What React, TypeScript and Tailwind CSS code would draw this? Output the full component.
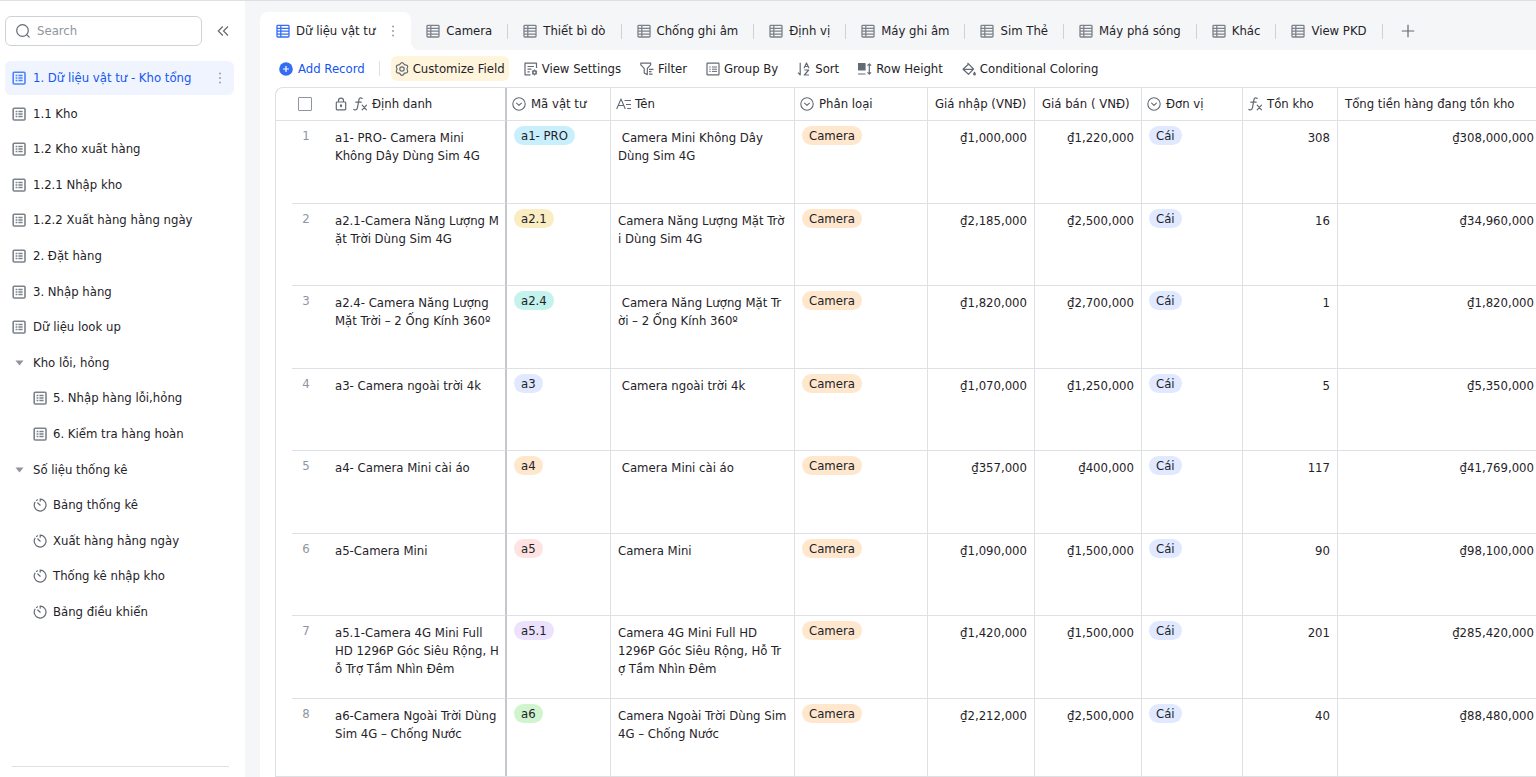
import React from 'react';
import { clsx } from 'clsx';

type IconProps = { className?: string };

function SheetIcon({ className }: IconProps) {
    return (
        <svg viewBox="0 0 14 14" className={clsx("w-[14px] h-[14px] shrink-0", className)} fill="none" stroke="currentColor">
            <rect x="1.2" y="1.2" width="11.8" height="11.8" rx="1" strokeWidth="1.6" />
            <path d="M3.6 4.5h1.8M3.6 7h1.8M3.6 9.5h1.8M6.4 4.5h4.2M6.4 7h4.2M6.4 9.5h4.2" strokeWidth="1.3" />
        </svg>
    );
}

function GridIcon({ className }: IconProps) {
    return (
        <svg viewBox="0 0 14 14" className={clsx("w-[14px] h-[14px] shrink-0", className)} fill="none" stroke="currentColor" strokeWidth="1.3">
            <rect x="1" y="1.3" width="12" height="11.7" rx="0.8" />
            <path d="M1 4.3h12M1 7.2h12M1 10.1h12M4.8 1.3V13" />
        </svg>
    );
}

function DashboardIcon({ className }: IconProps) {
    return (
        <svg viewBox="0 0 14 14" className={clsx("w-[14px] h-[14px] shrink-0", className)} fill="none" stroke="currentColor" strokeWidth="1.2" strokeLinecap="round">
            <path d="M7.2 3.2V1.2A5.9 5.9 0 1 1 2 4.200" />
            <path d="M3.500 2.400l1-.6M4.800 5l2.400 2.200" />
        </svg>
    );
}

function SelectIcon() {
    return (
        <svg viewBox="0 0 14 14" className="w-[14px] h-[14px] shrink-0 text-[#646a73]" fill="none" stroke="currentColor" strokeWidth="1.1" strokeLinecap="round" strokeLinejoin="round">
            <circle cx="7" cy="7" r="6.2" />
            <path d="M4.6 6.2L7 8.4l2.4-2.2" />
        </svg>
    );
}

function FormulaIcon() {
    return (
        <svg viewBox="0 0 15 14" className="w-[15px] h-[14px] shrink-0 text-[#646a73]" fill="none" stroke="currentColor" strokeWidth="1.2" strokeLinecap="round">
            <path d="M9.2 1.4C7.4.3 6.2 1 5.9 2.8L4.5 10.6c-.4 2.200-2 2.900-3.700 1.900M2.800 5.200h5.400" />
            <path d="M9.200 8.200l4.300 4.600M13.500 8.200l-4.300 4.600" />
        </svg>
    );
}

function LockIcon() {
    return (
        <svg viewBox="0 0 12 14" className="w-[12px] h-[14px] shrink-0 text-[#646a73]" fill="none" stroke="currentColor" strokeWidth="1.2">
            <rect x="1.300" y="5" width="9.400" height="7.800" rx="0.800" />
            <path d="M3.500 5V3.700a2.500 2.500 0 0 1 5 0V5" />
            <path d="M6 8.300v1" strokeWidth="2" strokeLinecap="round" />
        </svg>
    );
}

function TextIcon() {
    return (
        <svg viewBox="0 0 15 14" className="w-[15px] h-[14px] shrink-0 text-[#646a73]" fill="none" stroke="currentColor" strokeWidth="1.1">
            <path d="M.7 12L5 2l4.300 10M2.300 8.500h5.400" strokeLinejoin="round" />
            <path d="M8.500 3.500H15M10 7.500h5M11.200 11.500H15" />
        </svg>
    );
}

function SearchIcon() {
    return (
        <svg viewBox="0 0 14 14" className="w-[14px] h-[14px] shrink-0 text-[#646a73]" fill="none" stroke="currentColor" strokeWidth="1.2" strokeLinecap="round">
            <circle cx="6.5" cy="6.5" r="5.8" />
            <path d="M10.900 10.900l2.300 2.300" />
        </svg>
    );
}

function MoreIcon({ className }: IconProps) {
    return (
        <svg viewBox="0 0 4 12" className={clsx("w-1 h-3 shrink-0 text-[#8f959e]", className)} fill="currentColor">
            <circle cx="2" cy="1.5" r="0.9" />
            <circle cx="2" cy="6" r="0.9" />
            <circle cx="2" cy="10.5" r="0.9" />
        </svg>
    );
}

function ToolIcon({ children }: { children: React.ReactNode }) {
    return (
        <svg viewBox="0 0 14 14" className="w-[14px] h-[14px] shrink-0 text-[#646a73]" fill="none" stroke="currentColor" strokeWidth="1.2" strokeLinejoin="round">
            {children}
        </svg>
    );
}

const tools = [
    {
        label: 'Customize Field',
        highlight: true,
        icon: (
            <>
                <path d="M5.15 1.93Q7-.6 8.85 1.930Q9.200 3.190 10.470 2.860Q13.580 3.200 12.320 6.060Q11.400 7 12.320 7.940Q13.580 10.800 10.470 11.140Q9.200 10.810 8.850 12.070Q7 14.600 5.150 12.070Q4.800 10.810 3.530 11.140Q.42 10.800 1.680 7.940Q2.600 7 1.680 6.060Q.42 3.200 3.530 2.860Q4.800 3.190 5.150 1.930Z" />
                <circle cx="7" cy="7" r="2.2" />
            </>
        ),
    },
    {
        label: 'View Settings',
        icon: (
            <>
                <path d="M12.500 6V1.200H1v11.600h5.500M3.500 4.500h6.500M3.500 7.200h4M3.500 9.900h2.200" />
                <circle cx="10.500" cy="10.500" r="1.700" strokeWidth="1.500" />
                <path d="M10.500 7.600v1M10.500 12.400v1M8 9l.9.500M12.100 11.500l.9.500M8 12l.9-.5M12.100 9.500l.9-.5" />
            </>
        ),
    },
    {
        label: 'Filter',
        icon: <path d="M.8 1.200h9.900v1.600L7.300 6.300v6.300L4.200 11V6.300L.8 2.800zM9 7.300h4.500M9 9.700h2.500M9 12.200h3.500" />,
    },
    {
        label: 'Group By',
        icon: (
            <>
                <rect x="1" y="1.200" width="12" height="11.600" rx="0.6" />
                <path d="M3.300 5h1.400M3.300 7.200h1.400M3.300 9.400h1.400M6 5h5M6 7.200h5M6 9.400h5" strokeWidth="1" />
            </>
        ),
    },
    {
        label: 'Sort',
        icon: <path d="M3.200.8v12L1 10.600M7 6.200l2.500-5.200L12 6.200M7.900 4.500h3.200M7.300 8h4.400l-4.400 5h4.700" />,
    },
    {
        label: 'Row Height',
        icon: (
            <>
                <rect x="0.500" y="1.500" width="6.500" height="6.500" fill="currentColor" />
                <path d="M0 12h7.500M11.300 2v10M9.500 3.600l1.800-1.800 1.800 1.800M9.500 10.400l1.800 1.800 1.800-1.800" />
            </>
        ),
    },
    {
        label: 'Conditional Coloring',
        icon: (
            <>
                <path d="M5.500.8l6 6.200-5 5.300L1 7.300 6.700 2M1 7.300h10.500" />
                <path d="M12.500 10.300c1.200 1.700.9 2.700 0 2.700s-1.200-1 0-2.700z" fill="currentColor" />
            </>
        ),
    },
];

const tabs = ['Camera', 'Thiết bì dò', 'Chống ghi âm', 'Định vị', 'Máy ghi âm', 'Sim Thẻ', 'Máy phá sóng', 'Khác', 'View PKD'];

const navItems = [
    { label: '1. Dữ liệu vật tư - Kho tổng', kind: 'sheet', active: true },
    { label: '1.1 Kho', kind: 'sheet' },
    { label: '1.2 Kho xuất hàng', kind: 'sheet' },
    { label: '1.2.1 Nhập kho', kind: 'sheet' },
    { label: '1.2.2 Xuất hàng hằng ngày', kind: 'sheet' },
    { label: '2. Đặt hàng', kind: 'sheet' },
    { label: '3. Nhập hàng', kind: 'sheet' },
    { label: 'Dữ liệu look up', kind: 'sheet' },
    { label: 'Kho lỗi, hỏng', kind: 'folder' },
    { label: '5. Nhập hàng lỗi,hỏng', kind: 'sheet', nested: true },
    { label: '6. Kiểm tra hàng hoàn', kind: 'sheet', nested: true },
    { label: 'Số liệu thống kê', kind: 'folder' },
    { label: 'Bảng thống kê', kind: 'dashboard', nested: true },
    { label: 'Xuất hàng hằng ngày', kind: 'dashboard', nested: true },
    { label: 'Thống kê nhập kho', kind: 'dashboard', nested: true },
    { label: 'Bảng điều khiển', kind: 'dashboard', nested: true },
];

const rows = [
    { id: 'a1- PRO- Camera Mini\nKhông Dây Dùng Sim 4G', code: 'a1- PRO', color: 'bg-[#caeffc]', name: ' Camera Mini Không Dây\nDùng Sim 4G', buy: '1,000,000', sell: '1,220,000', stock: 308, total: '308,000,000' },
    { id: 'a2.1-Camera Năng Lượng M\nặt Trời Dùng Sim 4G', code: 'a2.1', color: 'bg-[#faedc2]', name: 'Camera Năng Lượng Mặt Trờ\ni Dùng Sim 4G', buy: '2,185,000', sell: '2,500,000', stock: 16, total: '34,960,000' },
    { id: 'a2.4- Camera Năng Lượng\nMặt Trời – 2 Ống Kính 360º', code: 'a2.4', color: 'bg-[#c4f2ec]', name: ' Camera Năng Lượng Mặt Tr\nời – 2 Ống Kính 360º', buy: '1,820,000', sell: '2,700,000', stock: 1, total: '1,820,000' },
    { id: 'a3- Camera ngoài trời 4k', code: 'a3', color: 'bg-[#e0e9ff]', name: ' Camera ngoài trời 4k', buy: '1,070,000', sell: '1,250,000', stock: 5, total: '5,350,000' },
    { id: 'a4- Camera Mini cài áo', code: 'a4', color: 'bg-[#fee7cd]', name: ' Camera Mini cài áo', buy: '357,000', sell: '400,000', stock: 117, total: '41,769,000' },
    { id: 'a5-Camera Mini', code: 'a5', color: 'bg-[#fee3e2]', name: 'Camera Mini', buy: '1,090,000', sell: '1,500,000', stock: 90, total: '98,100,000' },
    { id: 'a5.1-Camera 4G Mini Full\nHD 1296P Góc Siêu Rộng, H\nỗ Trợ Tầm Nhìn Đêm', code: 'a5.1', color: 'bg-[#ece2fe]', name: 'Camera 4G Mini Full HD\n1296P Góc Siêu Rộng, Hỗ Tr\nợ Tầm Nhìn Đêm', buy: '1,420,000', sell: '1,500,000', stock: 201, total: '285,420,000' },
    { id: 'a6-Camera Ngoài Trời Dùng\nSim 4G – Chống Nước', code: 'a6', color: 'bg-[#d0f5ce]', name: 'Camera Ngoài Trời Dùng Sim\n4G – Chống Nước', buy: '2,212,000', sell: '2,500,000', stock: 40, total: '88,480,000' },
];

function Pill({ color, children }: { color: string; children: React.ReactNode }) {
    return <span className={clsx("inline-flex items-center h-[19px] px-[7px] rounded-full", color)}>{children}</span>;
}

function Th({ children, className, colSpan }: { children: React.ReactNode; className?: string; colSpan?: number }) {
    return (
        <th colSpan={colSpan} className={clsx("h-[33px] p-0 font-normal text-left align-middle border-b border-[#dee0e3]", className)}>
            {children}
        </th>
    );
}

function Td({ children, className }: { children?: React.ReactNode; className?: string }) {
    return <td className={clsx("p-0 px-[7px] align-top border-b border-r border-[#dee0e3]", className)}>{children}</td>;
}

function Sidebar() {
    return (
        <aside className="w-[245px] shrink-0 bg-white flex flex-col">
            <div className="flex items-center mt-[15px] ml-[5px] pr-4">
                <label className="flex items-center gap-[7px] w-[198px] h-[30px] pl-[10px] border border-[#d0d3d6] rounded-md">
                    <SearchIcon />
                    <input type="text" placeholder="Search" aria-label="Search" className="w-full min-w-0 pr-2 outline-none bg-transparent placeholder:text-[#8f959e]" />
                </label>
                <button aria-label="Collapse sidebar" className="ml-[15px] text-[#646a73]">
                    <svg viewBox="0 0 12 12" className="w-3 h-3" fill="none" stroke="currentColor" strokeWidth="1.2">
                        <path d="M5.800 1.500L1.300 6l4.500 4.500M11 1.500L6.500 6l4.500 4.500" />
                    </svg>
                </button>
            </div>
            <nav className="mt-[15px] ml-[5px] mr-[11px] h-[568px] flex flex-col justify-between">
                {navItems.map((item) => (
                    <a
                        key={item.label}
                        href="#"
                        className={clsx(
                            "flex items-center h-[34px] rounded-md pr-3 whitespace-nowrap",
                            item.nested ? "pl-7 gap-[6px]" : "pl-[7px] gap-[7px]",
                            item.active ? "bg-[#f0f4ff] text-[#1456f0]" : "text-[#1f2329]"
                        )}
                    >
                        {item.kind === 'sheet' && <SheetIcon className={item.active ? "text-[#4e83fd]" : "text-[#7c828b]"} />}
                        {item.kind === 'dashboard' && <DashboardIcon className="text-[#646a73]" />}
                        {item.kind === 'folder' && (
                            <svg viewBox="0 0 14 14" className="w-[14px] h-[14px] shrink-0 text-[#8f959e]" fill="currentColor">
                                <path d="M3.500 4.500h8L7.500 9.500z" />
                            </svg>
                        )}
                        <span className="flex-1">{item.label}</span>
                        {item.active && <MoreIcon />}
                    </a>
                ))}
            </nav>
            <div className="mt-auto mb-[10px] ml-3 mr-4 border-b border-[#dee0e3]" />
        </aside>
    );
}

function TabBar() {
    return (
        <div className="flex items-end h-[49px]">
            <button className="relative flex items-center h-[38px] px-4 gap-[6px] bg-white rounded-t-lg whitespace-nowrap">
                <GridIcon className="text-[#336df4]" />
                Dữ liệu vật tư
                <MoreIcon className="ml-[10px]" />
                {/* inverse corner where the active tab meets the bar */}
                <span className="absolute left-full bottom-0 w-2 h-2 bg-white">
                    <span className="block w-2 h-2 bg-[#f5f6f7] rounded-bl-lg" />
                </span>
            </button>
            {tabs.map((tab) => (
                <div key={tab} className="flex items-center h-[38px]">
                    <button className="flex items-center px-[15px] gap-[6px] whitespace-nowrap">
                        <GridIcon className="text-[#7c828b]" />
                        {tab}
                    </button>
                    <span className="w-px h-[15px] bg-[#d0d3d6]" />
                </div>
            ))}
            <button aria-label="Add view" className="flex items-center h-[38px] pl-[18px] text-[#646a73]">
                <svg viewBox="0 0 14 14" className="w-[14px] h-[14px]" stroke="currentColor" strokeWidth="1.2">
                    <path d="M7 .8v12.400M.8 7h12.400" />
                </svg>
            </button>
        </div>
    );
}

function Toolbar() {
    return (
        <div className="flex items-center h-[37px] pl-[19px] whitespace-nowrap">
            <button className="flex items-center gap-[5px] text-[#1456f0]">
                <svg viewBox="0 0 14 14" className="w-[14px] h-[14px]" fill="none">
                    <circle cx="7" cy="7" r="6.8" fill="#336df4" />
                    <path d="M7 4v6M4 7h6" stroke="white" strokeWidth="1.2" />
                </svg>
                Add Record
            </button>
            <span className="ml-[14px] mr-[11px] w-px h-[15px] bg-[#dee0e3]" />
            <div className="flex items-center gap-[11px]">
                {tools.map((tool) => (
                    <button key={tool.label} className={clsx("flex items-center gap-1 h-[25px] px-[4px] rounded-md", tool.highlight && "bg-[#fff5dc]")}>
                        <ToolIcon>{tool.icon}</ToolIcon>
                        {tool.label}
                    </button>
                ))}
            </div>
        </div>
    );
}

function DataGrid() {
    return (
        <div className="ml-[15px] flex-1 min-h-0 overflow-hidden border-t border-l border-b border-[#dee0e3] rounded-tl-lg">
            <table className="w-full table-fixed border-separate border-spacing-0 leading-[18px]">
                <colgroup>
                    <col className="w-[16px]" />
                    <col className="w-[36px]" />
                    <col className="w-[179px]" />
                    <col className="w-[104px]" />
                    <col className="w-[184px]" />
                    <col className="w-[133px]" />
                    <col className="w-[107px]" />
                    <col className="w-[107px]" />
                    <col className="w-[101px]" />
                    <col className="w-[95px]" />
                    <col />
                </colgroup>
                <thead>
                    <tr className="whitespace-nowrap">
                        <Th colSpan={2}>
                            <input type="checkbox" aria-label="Select all" className="block ml-[22px] w-[14px] h-[14px] appearance-none border border-[#8f959e] rounded-[1px]" />
                        </Th>
                        <Th className="pl-[7px] border-r-2 border-r-[#c4c7cc]">
                            <div className="flex items-center">
                                <LockIcon />
                                <span className="ml-[6px] mr-1"><FormulaIcon /></span>
                                Định danh
                            </div>
                        </Th>
                        <Th className="pl-[5px] border-r">
                            <div className="flex items-center gap-[5px]"><SelectIcon />Mã vật tư</div>
                        </Th>
                        <Th className="pl-[5px] border-r">
                            <div className="flex items-center gap-1"><TextIcon />Tên</div>
                        </Th>
                        <Th className="pl-[5px] border-r">
                            <div className="flex items-center gap-[5px]"><SelectIcon />Phân loại</div>
                        </Th>
                        <Th className="pl-[7px] border-r">Giá nhập (VNĐ)</Th>
                        <Th className="pl-[7px] border-r">Giá bán ( VNĐ)</Th>
                        <Th className="pl-[5px] border-r">
                            <div className="flex items-center gap-[5px]"><SelectIcon />Đơn vị</div>
                        </Th>
                        <Th className="pl-[5px] border-r">
                            <div className="flex items-center gap-1"><FormulaIcon />Tồn kho</div>
                        </Th>
                        <Th className="pl-[7px]">Tổng tiền hàng đang tồn kho</Th>
                    </tr>
                </thead>
                <tbody>
                    {rows.map((row, i) => (
                        <tr key={row.code} className="odd:h-[83px] even:h-[82px]">
                            <td className="p-0" />
                            <Td className="pt-[6px] pl-0 pr-2 text-center text-[#8f959e] border-r-0">{i + 1}</Td>
                            <Td className="pt-[8px] border-r-2 border-r-[#c4c7cc] whitespace-pre">{row.id}</Td>
                            <Td className="pt-[5px]"><Pill color={row.color}>{row.code}</Pill></Td>
                            <Td className="pt-[8px] whitespace-pre">{row.name}</Td>
                            <Td className="pt-[5px]"><Pill color="bg-[#fee7cd]">Camera</Pill></Td>
                            <Td className="pt-[8px] text-right">₫{row.buy}</Td>
                            <Td className="pt-[8px] text-right">₫{row.sell}</Td>
                            <Td className="pt-[5px]"><Pill color="bg-[#e0e9ff]">Cái</Pill></Td>
                            <Td className="pt-[8px] text-right">{row.stock}</Td>
                            <Td className="pt-[8px] pr-[2px] text-right border-r-0">₫{row.total}</Td>
                        </tr>
                    ))}
                </tbody>
            </table>
        </div>
    );
}

export default function App() {
    return (
        <div className="h-screen flex overflow-hidden border-t border-[#dee0e3] bg-[#f5f6f7] font-['DejaVu_Sans_Condensed','Noto_Sans',sans-serif] text-[13px] leading-[18px] text-[#1f2329]">
            <Sidebar />
            <main className="ml-[15px] flex-1 min-w-0 flex flex-col">
                <TabBar />
                <div className="flex-1 min-h-0 flex flex-col bg-white">
                    <Toolbar />
                    <DataGrid />
                </div>
            </main>
        </div>
    );
}
